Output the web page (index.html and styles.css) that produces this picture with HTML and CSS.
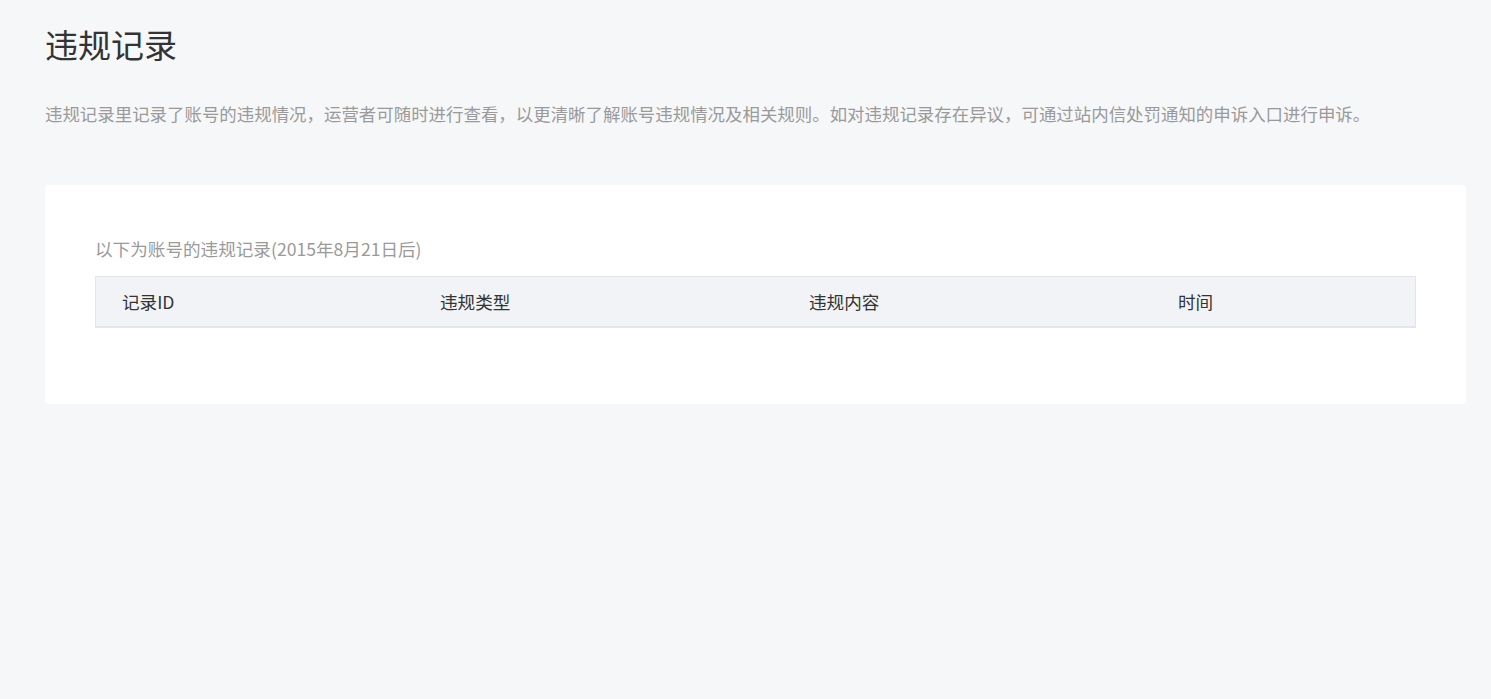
FILE: index.html
```html
<!doctype html>
<html>
    <head>
        <title>违规记录</title>
        <link rel="stylesheet" href="styles.css">
    </head>
    <body>
        <div id="page">
            <h2 class="page-title">违规记录</h2>
            <p class="page-desc">违规记录里记录了账号的违规情况，运营者可随时进行查看，以更清晰了解账号违规情况及相关规则。如对违规记录存在异议，可通过站内信处罚通知的申诉入口进行申诉。</p>
            <div class="card">
                <div class="card-caption">以下为账号的违规记录(2015年8月21日后)</div>
                <div class="record-table">
                    <div class="record-head">
                        <div class="cell">记录ID</div>
                        <div class="cell">违规类型</div>
                        <div class="cell">违规内容</div>
                        <div class="cell">时间</div>
                    </div>
                </div>
            </div>
        </div>
    </body>
</html>
```

FILE: styles.css
```css
* {
    margin: 0;
    padding: 0;
    box-sizing: border-box;
}
html, body {
    height: 100%;
}
body {
    background: #f6f7f9;
    color: #333;
    font-family: "Noto Sans CJK SC", "Liberation Sans", sans-serif;
    font-size: 17.6px;
}
#page {
    padding: 20px 25px 0 45px;
}
.page-title {
    font-size: 33px;
    font-weight: normal;
    line-height: 48px;
    color: #333;
}
.page-desc {
    margin-top: 33px;
    font-size: 17.45px;
    line-height: 26px;
    color: #9a9a9a;
}
.card {
    margin-top: 58px;
    background: #fff;
    border-radius: 4px;
    padding: 51px 50px 76px;
}
.card-caption {
    line-height: 26px;
    color: #9a9a9a;
}
.record-table {
    margin-top: 14px;
}
.record-head {
    display: grid;
    grid-template-columns: 318px 369px 369px 1fr;
    height: 52px;
    align-items: center;
    background: #f2f3f6;
    border: 1px solid #e4e5e9;
    border-bottom-width: 2px;
}
.record-head .cell {
    padding-left: 26px;
    color: #333;
}
```
